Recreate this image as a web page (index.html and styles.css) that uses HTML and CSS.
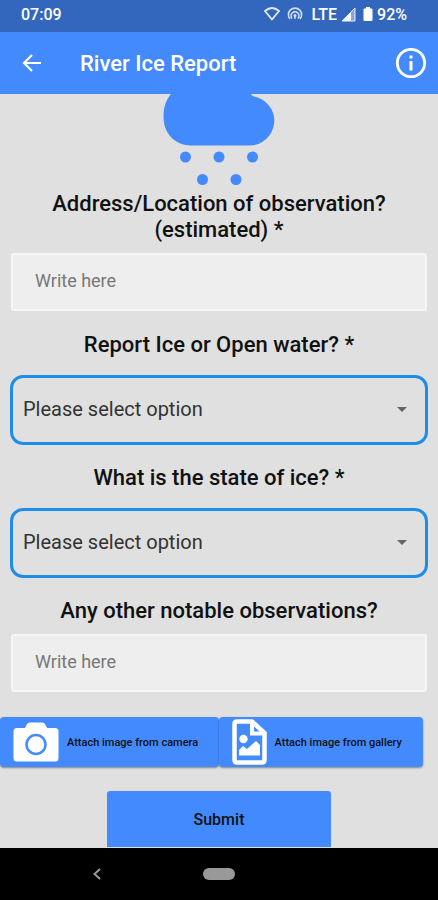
FILE: index.html
```html
<!DOCTYPE html>
<html lang="en">
<head>
<meta charset="utf-8">
<meta name="viewport" content="width=device-width, initial-scale=1">
<title>River Ice Report</title>
<link rel="stylesheet" href="styles.css">
</head>
<body>
<div class="status">
  <span class="time">07:09</span>
  <svg class="status-wifi" width="18" height="16" viewBox="0 0 18 16" aria-hidden="true"><path d="M2 5Q9-1 16 5L9 13.500Z" fill="none" stroke="#e6edfa" stroke-width="1.800" stroke-linejoin="round"/></svg>
  <svg class="status-hotspot" width="16" height="16" viewBox="0 0 16 16" aria-hidden="true"><g fill="none" stroke="#d5e0f4" stroke-width="1.600"><path d="M3 13A6.600 6.600 0 1 1 13 13"/><path d="M5 12.500A4 4 0 1 1 11 12.500"/></g><circle cx="8" cy="9.500" r="1.500" fill="#d5e0f4"/><path d="M7.300 10H8.700V13H7.300Z" fill="#d5e0f4"/></svg>
  <span class="network">LTE</span>
  <svg class="status-signal" width="15" height="15" viewBox="0 0 15 15" aria-hidden="true"><path d="M14 1V14H1Z" fill="#87a7dc"/><path d="M10 5V14H1Z" fill="#fff"/><path d="M14 1V14H1Z" fill="none" stroke="#e6edfa"/></svg>
  <svg class="status-battery" width="10" height="16" viewBox="0 0 10 16" aria-hidden="true"><path d="M3 1H7V2.500H8.500Q9.500 2.500 9.500 3.500V14Q9.500 15 8.500 15H1.500Q.5 15 .5 14V3.500Q.5 2.500 1.500 2.500H3Z" fill="#fff"/></svg>
  <span>92%</span>
</div>
<header class="appbar">
  <button class="icon-button" type="button" aria-label="Back"><svg width="20" height="20" viewBox="0 0 20 20"><path d="M19 10H2M10 2L2 10L10 18" fill="none" stroke="#fff" stroke-width="2.200"/></svg></button>
  <h1 class="title">River Ice Report</h1>
  <button class="icon-button" type="button" aria-label="Information"><svg width="32" height="32" viewBox="0 0 32 32"><circle cx="16" cy="16" r="13.700" fill="none" stroke="#fff" stroke-width="2.800"/><path d="M14.500 8.500H17.500V11.500H14.500ZM14.500 14H17.500V23.500H14.500Z" fill="#fff"/></svg></button>
</header>
<main class="content">
  <form class="form">
    <svg class="cloud" width="112" height="93" viewBox="0 0 112 93" aria-hidden="true"><g fill="#448aff"><path d="M8 0H88Q89 2 91 2.500A24.700 24.700 0 0 1 87 51.500H28C13 51.500 .5 40 .5 23C.5 13 3 6 8 0Z"/><circle cx="22.500" cy="63" r="5.500"/><circle cx="56" cy="63" r="5.500"/><circle cx="89.500" cy="63" r="5.500"/><circle cx="39.500" cy="85.500" r="5.500"/><circle cx="73" cy="85.500" r="5.500"/></g></svg>
    <div class="field">
      <label class="question" for="address">Address/Location of observation? (estimated) *</label>
      <input class="textbox" id="address" type="text" placeholder="Write here">
    </div>
    <div class="field choice">
      <label class="question" for="water">Report Ice or Open water? *</label>
      <select class="select" id="water"><option>Please select option</option></select>
    </div>
    <div class="field choice">
      <label class="question" for="ice">What is the state of ice? *</label>
      <select class="select" id="ice"><option>Please select option</option></select>
    </div>
    <div class="field">
      <label class="question" for="notes">Any other notable observations?</label>
      <input class="textbox" id="notes" type="text" placeholder="Write here">
    </div>
    <div class="attachments">
      <button class="attach camera" type="button">
        <svg width="46" height="40" viewBox="0 0 46 40" aria-hidden="true"><path d="M4 6H12L14 2Q15 .5 17 .5H29Q31 .5 32 2L34 6H42Q45.500 6 45.500 9.500V36Q45.500 39.500 42 39.500H4Q.5 39.500 .5 36V9.500Q.5 6 4 6Z" fill="#fff"/><circle cx="23" cy="22.500" r="9.500" fill="#fff" stroke="#448aff" stroke-width="2.500"/></svg>
        <span>Attach image from camera</span>
      </button>
      <button class="attach gallery" type="button">
        <svg width="35" height="46" viewBox="0 0 35 46" aria-hidden="true"><path d="M5 2.500H20L32.500 14V41Q32.500 43.500 30 43.500H5Q2.500 43.500 2.500 41V5Q2.500 2.500 5 2.500Z" fill="none" stroke="#fff" stroke-width="4.500"/><path d="M20 3V14.500H32" fill="none" stroke="#fff" stroke-width="4"/><circle cx="11.500" cy="20" r="4.200" fill="#fff"/><path d="M7 36.500V31L11 27L15 30L24 22L28 26V36.500Z" fill="#fff"/></svg>
        <span>Attach image from gallery</span>
      </button>
    </div>
    <button class="submit" type="submit">Submit</button>
  </form>
</main>
<nav class="navbar" aria-label="System">
  <button class="icon-button system-back" type="button" aria-label="System back"><svg width="10" height="14" viewBox="0 0 10 14"><path d="M8 2L2.500 7L8 12" fill="none" stroke="#999" stroke-width="2"/></svg></button>
  <button class="home" type="button" aria-label="Home"></button>
</nav>
</body>
</html>
```
FILE: styles.css
```css
* { box-sizing: border-box; }

body {
  margin: 0;
  min-height: 100vh;
  display: flex;
  flex-direction: column;
  background: #e0e0e0;
  color: #111;
  font-family: Roboto, "Liberation Sans", sans-serif;
}

button, input, select { font-family: inherit; }

button {
  border: 0;
  padding: 0;
  color: #111;
  cursor: pointer;
}

svg { display: block; flex: none; }

.status {
  display: flex;
  align-items: center;
  height: 32px;
  padding: 0 31px 4px 21px;
  background: #3367be;
  color: #fff;
  font-size: 16px;
  font-weight: 500;
}

.time { margin-right: auto; }
.status-hotspot { margin: 0 9px 0 6px; }
.status-signal { margin-left: 4px; }
.status-battery { margin: 0 4px 0 7px; }

.appbar {
  display: flex;
  align-items: center;
  height: 62px;
  padding: 0 11px 0 22px;
  background: #448aff;
  color: #fff;
}

.icon-button { background: none; }

.title {
  flex: 1;
  margin: 0 0 0 38px;
  font-size: 22px;
  font-weight: 500;
}

.content { flex: 1; }

.form {
  display: flex;
  flex-direction: column;
}

.cloud { align-self: center; margin-bottom: 4px; }

.field {
  display: flex;
  flex-direction: column;
  gap: 10px;
  margin: 0 11px 21px;
}

.choice {
  gap: 17px;
  margin: 0 10px 20px;
}

.question {
  padding: 0 32px;
  font-size: 22px;
  font-weight: 500;
  line-height: 26px;
  text-align: center;
}

.textbox {
  width: 100%;
  height: 58px;
  padding: 0 22px 4px;
  border: 2px solid #f6f6f6;
  border-radius: 3px;
  background: #eee;
  font-size: 18px;
}

.textbox::placeholder { color: #777; }

.select {
  width: 100%;
  height: 70px;
  padding: 0 30px 2px 10px;
  border: 3px solid #1e8de8;
  border-radius: 13px;
  appearance: none;
  background: url("data:image/svg+xml,%3Csvg xmlns='http://www.w3.org/2000/svg' width='12' height='6'%3E%3Cpath d='M1 0H11L6 5Z' fill='%23666'/%3E%3C/svg%3E") no-repeat right 17px center;
  color: #333;
  font-size: 20px;
}

.attachments {
  display: flex;
  margin: 4px 15px 24px 0;
}

.attach {
  display: flex;
  align-items: center;
  height: 50px;
  border-radius: 4px;
  background: #448aff;
  box-shadow: 0 1px 2px #0006;
  font-size: 11px;
  font-weight: 500;
}

.camera {
  flex: 219;
  gap: 8px;
  padding-left: 13px;
}

.gallery {
  flex: 204;
  gap: 8px;
  padding-left: 13px;
}

.submit {
  align-self: center;
  width: 51%;
  height: 56px;
  border-radius: 3px 3px 0 0;
  background: #448aff;
  font-size: 16px;
  font-weight: 500;
}

.navbar {
  display: grid;
  grid-template-columns: 1fr 32px 1fr;
  align-items: center;
  justify-items: center;
  height: 52px;
  background: #000;
}

.system-back { padding-right: 10px; }

.home {
  width: 32px;
  height: 12px;
  border-radius: 6px;
  background: #999;
}
```
